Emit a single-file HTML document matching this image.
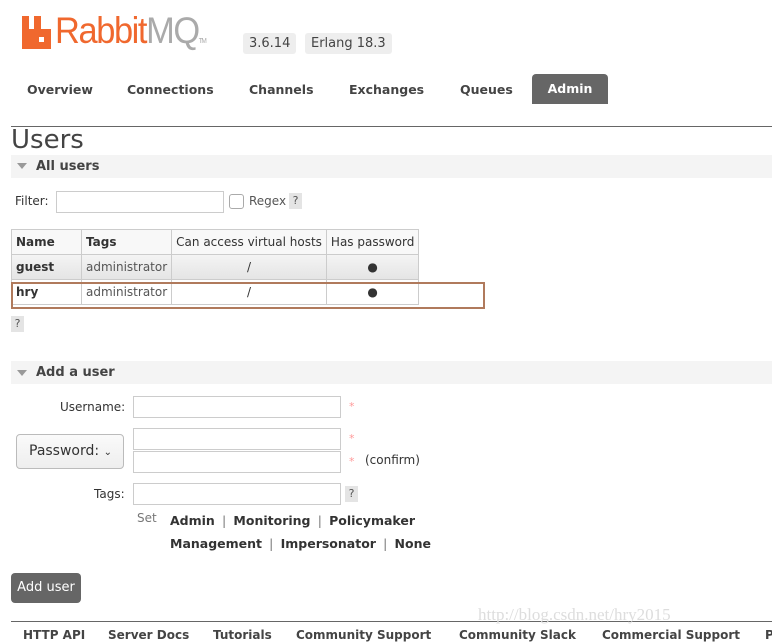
<!DOCTYPE html>
<html><head><meta charset="utf-8"><style>
*{margin:0;padding:0;box-sizing:border-box}
body{width:772px;height:637px;overflow:hidden;background:#fff;font-family:"DejaVu Sans","Liberation Sans",sans-serif;color:#333;position:relative;font-size:12px}
.a{position:absolute;white-space:nowrap}
.b{font-weight:bold}
.badge{background:#eee;border-radius:3px;padding:3px 6px;font-size:13px;color:#444}
.nav{font-weight:bold;font-size:12.5px;color:#444}
.inp{position:absolute;border:1px solid #ccc;background:#fff;height:22px}
.q{position:absolute;background:#e4e4e4;color:#555;font-size:11px;width:13px;height:16px;text-align:center;line-height:16px}
.sect{position:absolute;left:11px;width:761px;height:23px;background:#f4f4f4}
table{position:absolute;left:11px;top:229px;border-collapse:collapse;font-size:12px;white-space:nowrap}
td,th{border:1px solid #ccc;height:25px;padding:0 4px;text-align:left}
th{background:#f8f8f8}
.star{color:#f99;font-size:11px}
.tag{font-weight:bold;font-size:12.5px;color:#333}
.sep{color:#999;margin:0 7px}
</style></head><body>
<svg class="a" style="left:22px;top:16px" width="29" height="33" viewBox="0 0 29 33"><path d="M0 0h7v13h5V0h7v13h10v20H0z" fill="#f0682e"/><rect x="17" y="21" width="5" height="5" fill="#fff"/></svg>
<div class="a" style="left:55px;top:10px;font-family:'Liberation Sans',sans-serif;font-size:37px;letter-spacing:-1.5px;color:#f0682e;transform:scaleX(0.93);transform-origin:left">Rabbit<span style="color:#aaa">MQ</span><span style="font-size:7px;color:#aaa">TM</span></div>
<div class="a badge" style="left:243px;top:33px">3.6.14</div>
<div class="a badge" style="left:305px;top:33px">Erlang 18.3</div>
<div class="a nav" style="left:27px;top:82px">Overview</div>
<div class="a nav" style="left:127px;top:82px">Connections</div>
<div class="a nav" style="left:249px;top:82px">Channels</div>
<div class="a nav" style="left:349px;top:82px">Exchanges</div>
<div class="a nav" style="left:460px;top:82px">Queues</div>
<div class="a nav" style="left:532px;top:74px;width:76px;height:30px;background:#666;color:#fff;border-radius:4px 4px 0 0;text-align:center;line-height:30px">Admin</div>
<div class="a" style="left:11px;top:126px;width:761px;height:1px;background:#666"></div>
<div class="a" style="left:11px;top:125px;font-size:26px;color:#444">Users</div>
<div class="sect" style="top:155px"></div>
<div class="a" style="left:17px;top:163px;width:0;height:0;border:5px solid transparent;border-top:6px solid #999"></div>
<div class="a b" style="left:36px;top:159px;font-size:13px;color:#444">All users</div>
<div class="a" style="left:15px;top:194px">Filter:</div>
<div class="inp" style="left:56px;top:191px;width:168px;height:22px"></div>
<div class="a" style="left:229px;top:194px;width:15px;height:15px;border:1px solid #aaa;border-radius:3px"></div>
<div class="a" style="left:249px;top:194px;color:#555">Regex</div>
<div class="q" style="left:289px;top:193px">?</div>
<table>
<tr><th style="width:70px">Name</th><th style="width:89px">Tags</th><th style="font-weight:normal;width:154px">Can access virtual hosts</th><th style="font-weight:normal;width:92px">Has password</th></tr>
<tr style="background:linear-gradient(#f4f4f4,#e4e4e4)"><td class="b">guest</td><td style="color:#555">administrator</td><td style="text-align:center">/</td><td style="text-align:center">●</td></tr>
<tr><td class="b">hry</td><td style="color:#555">administrator</td><td style="text-align:center">/</td><td style="text-align:center">●</td></tr>
</table>
<div class="a" style="left:11px;top:282px;width:474px;height:27px;border:2px solid #b07a5c"></div>
<div class="q" style="left:11px;top:316px">?</div>
<div class="sect" style="top:361px"></div>
<div class="a" style="left:17px;top:370px;width:0;height:0;border:5px solid transparent;border-top:6px solid #999"></div>
<div class="a b" style="left:36px;top:365px;font-size:13px;color:#444">Add a user</div>
<div class="a" style="left:60px;top:400px">Username:</div>
<div class="inp" style="left:133px;top:396px;width:208px"></div>
<div class="a star" style="left:349px;top:400px">*</div>
<div class="a" style="left:16px;top:434px;width:108px;height:35px;border:1px solid #bbb;border-radius:4px;background:linear-gradient(#fafafa,#eee);font-size:14px;line-height:33px;padding-left:12px">Password: <span style="font-size:10px">⌄</span></div>
<div class="inp" style="left:133px;top:428px;width:208px"></div>
<div class="inp" style="left:133px;top:451px;width:208px"></div>
<div class="a star" style="left:349px;top:432px">*</div>
<div class="a star" style="left:349px;top:455px">*</div>
<div class="a" style="left:365px;top:453px">(confirm)</div>
<div class="a" style="left:94px;top:487px">Tags:</div>
<div class="inp" style="left:133px;top:483px;width:208px"></div>
<div class="q" style="left:345px;top:486px">?</div>
<div class="a" style="left:137px;top:511px;color:#777">Set</div>
<div class="a tag" style="left:170px;top:513px">Admin<span class="sep">|</span>Monitoring<span class="sep">|</span>Policymaker</div>
<div class="a tag" style="left:170px;top:536px">Management<span class="sep">|</span>Impersonator<span class="sep">|</span>None</div>
<div class="a" style="left:11px;top:573px;width:70px;height:30px;background:#666;color:#fff;border-radius:4px;text-align:center;line-height:30px;font-size:13px">Add user</div>
<div class="a" style="left:11px;top:621px;width:761px;height:1px;background:#666"></div>
<div class="a" style="left:478px;top:605px;font-family:'Liberation Serif',serif;font-size:17px;color:#ddd">http://blog.csdn.net/hry2015</div>
<div class="a nav" style="left:23px;top:628px;font-size:12px"><span class="a" style="left:0">HTTP API</span><span class="a" style="left:85px">Server Docs</span><span class="a" style="left:190px">Tutorials</span><span class="a" style="left:273px">Community Support</span><span class="a" style="left:436px">Community Slack</span><span class="a" style="left:579px">Commercial Support</span><span class="a" style="left:742px">P</span></div>
</body></html>
